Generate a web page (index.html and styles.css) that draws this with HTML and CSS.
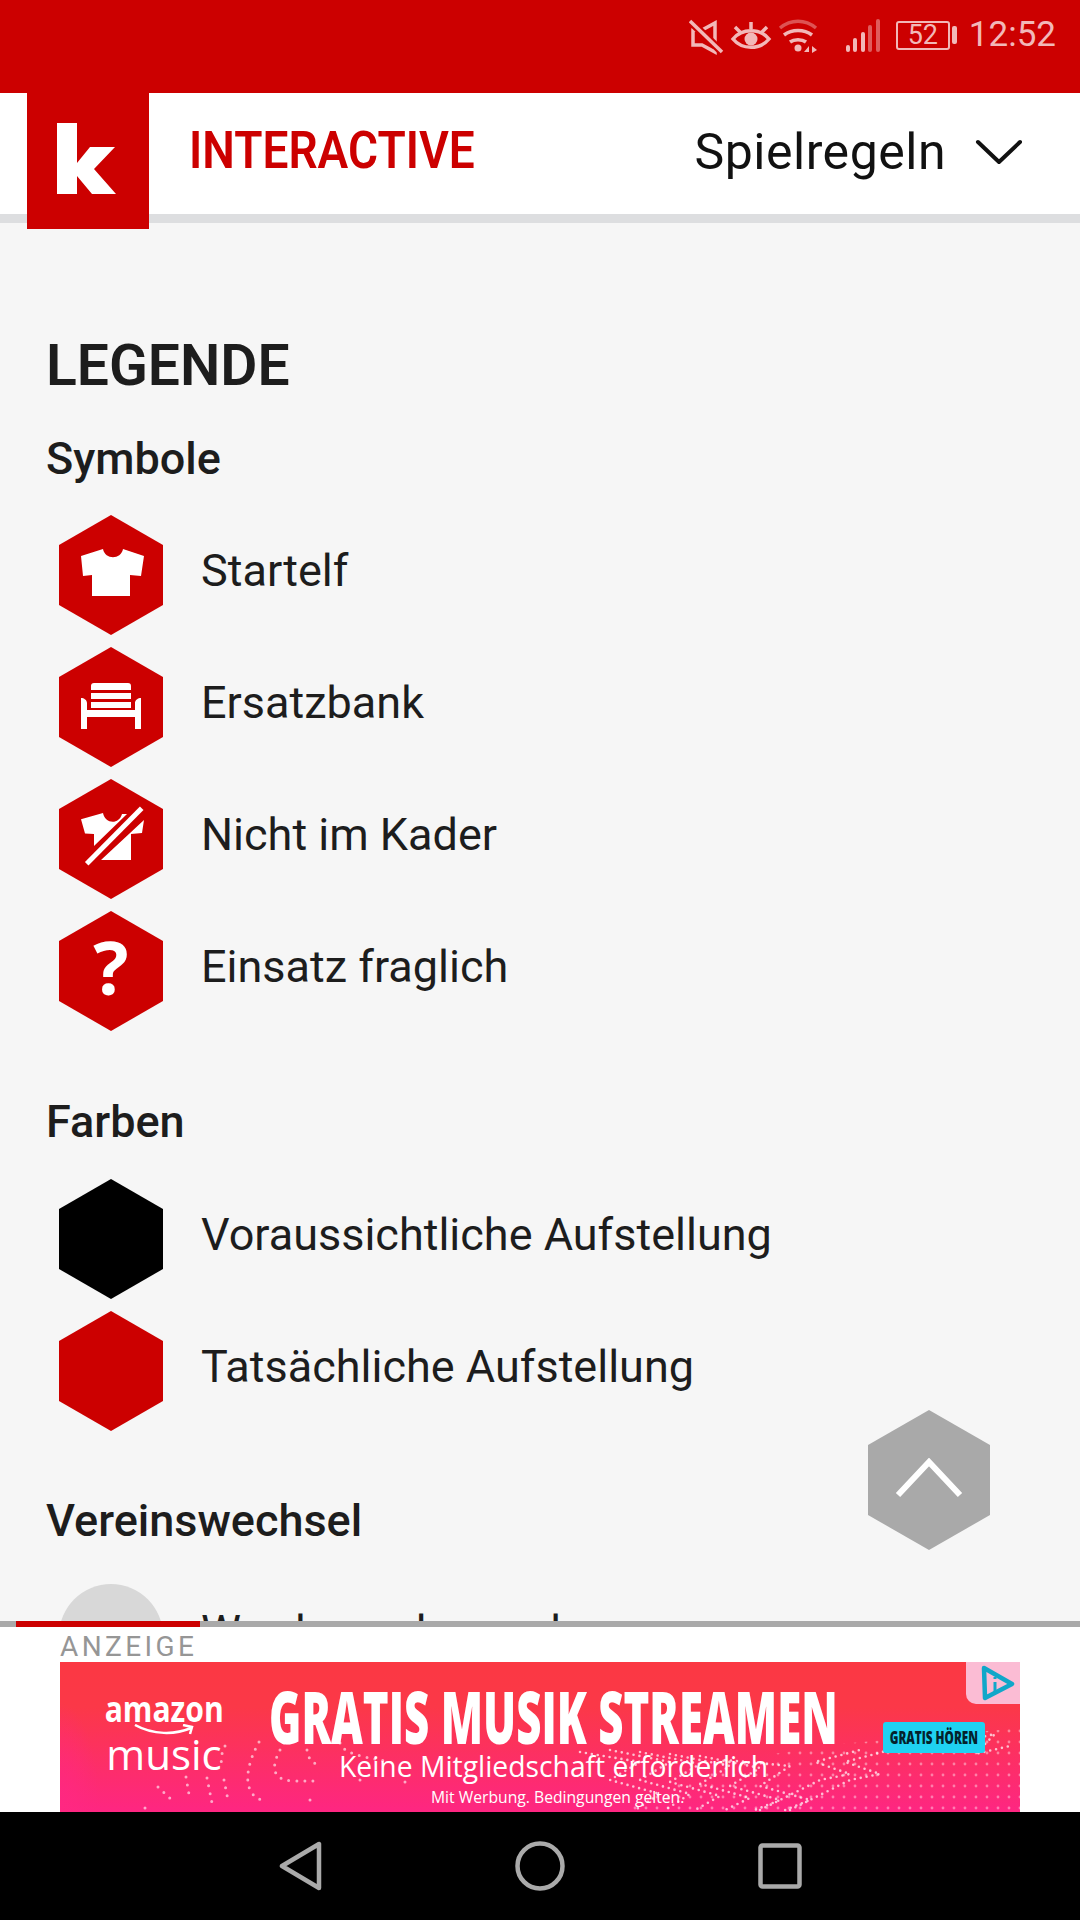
FILE: index.html
```html
<!DOCTYPE html>
<html lang="de">
  <head>
    <meta charset="UTF-8" />
    <meta name="viewport" content="width=device-width, initial-scale=1.0" />
    <title>Legende</title>
    <link rel="stylesheet" href="styles.css">
  </head>
  <body>
    <div class="statusbar">
      <svg class="status-icons" width="191" height="40" viewBox="0 0 191 40">
        <g fill="none" stroke="#f2b8b8" stroke-width="3.5">
          <path d="M4 13h9l13-7v29l-13-7h-9z" />
          <path d="M1 4l32 31" stroke="#cc0000" stroke-width="8" />
          <path d="M1 4l32 31" />
          <path d="M44 22c9-11 27-11 36 0c-9 11-27 11-36 0z" />
          <path d="M62 5v7M46 10l6 6M78 10l-6 6" />
          <path d="M91 11c11-9 25-9 36 0" opacity=".45" />
          <path d="M95 18c8-6 20-6 28 0" />
          <path d="M101 25c4-3 12-3 16 0" />
        </g>
        <circle cx="62" cy="22" r="6.5" fill="#f2b8b8" />
        <circle cx="109" cy="31" r="3.5" fill="#f2b8b8" />
        <path d="M115 35l5-6v6zM123 29l5 4l-5 3z" fill="#f2b8b8" />
        <g fill="#f2b8b8">
          <rect x="157" y="28" width="4" height="7" rx="2" />
          <rect x="164" y="21" width="4" height="14" rx="2" />
          <rect x="172" y="15" width="4" height="20" rx="2" />
          <rect x="179" y="8" width="4" height="27" rx="2" opacity=".5" />
          <rect x="187" y="2" width="4" height="33" rx="2" opacity=".5" />
        </g>
      </svg>
      <div class="battery"><span>52</span></div>
      <div class="battery-cap"></div>
      <span class="clock">12:52</span>
    </div>

    <header class="topbar">
      <div class="logo">
        <svg width="59" height="71" viewBox="0 0 59 71">
          <path d="M0 0H20V40L33 24H58L37 46L59 71H35L20 53V71H0Z" fill="#fff" />
        </svg>
      </div>
      <span class="brand">INTERACTIVE</span>
      <div class="menu">
        <span>Spielregeln</span>
        <svg width="48" height="26" viewBox="0 0 48 26">
          <path d="M3 3l21 20l21-20" fill="none" stroke="#111" stroke-width="4" stroke-linecap="round" stroke-linejoin="round" />
        </svg>
      </div>
    </header>

    <main class="content">
      <h1>LEGENDE</h1>

      <h2 class="symbole">Symbole</h2>
      <ul class="legend">
        <li>
          <div class="hex">
            <svg class="hex-icon" width="64" height="50" viewBox="0 0 64 50"><path d="M0 9l22-7c2 11 18 11 20 0l21 7-3 20-11-1v21h-38v-21l-9 1z" fill="#fff" /></svg>
          </div>
          <span>Startelf</span>
        </li>
        <li>
          <div class="hex">
            <svg class="bench-icon" width="60" height="46" viewBox="0 0 60 46">
              <path d="M10 3a3 3 0 0 1 3-3h34a3 3 0 0 1 3 3v4h-40zM10 10h40v6h-40zM10 19h40v6h-40zM0 15c3 0 6 2 6 5v7h48v-7c0-3 3-5 6-5v31h-6v-12h-48v12h-6z" fill="#fff" />
            </svg>
          </div>
          <span>Ersatzbank</span>
        </li>
        <li>
          <div class="hex">
            <svg class="hex-icon" width="64" height="60" viewBox="0 0 64 60">
              <path d="M0 13.3L22 7C24 18 38 19 41 8L46 8L13 40V28L4 27.5ZM20 54L63 14L61 27L50 28V54Z" fill="#fff" />
              <path d="M5.7 57.7L60.7 2.3" stroke="#fff" stroke-width="5" />
            </svg>
          </div>
          <span>Nicht im Kader</span>
        </li>
        <li>
          <div class="hex"><span class="question">?</span></div>
          <span>Einsatz fraglich</span>
        </li>
      </ul>

      <h2 class="farben">Farben</h2>
      <ul class="legend">
        <li>
          <div class="hex black"></div>
          <span>Voraussichtliche Aufstellung</span>
        </li>
        <li>
          <div class="hex"></div>
          <span>Tatsächliche Aufstellung</span>
        </li>
      </ul>

      <h2 class="wechsel">Vereinswechsel</h2>
      <ul class="legend">
        <li>
          <div class="circle"></div>
          <span>Wurde an den anderen</span>
        </li>
      </ul>
    </main>

    <button class="to-top">
      <svg width="68" height="40" viewBox="0 0 68 40"><path d="M3 37l31-33l31 33" fill="none" stroke="#fff" stroke-width="6" /></svg>
    </button>

    <div class="ad-area">
      <div class="progress"></div>
      <div class="ad-label">ANZEIGE</div>
      <div class="banner">
        <svg class="dots" width="960" height="150" viewBox="0 0 960 150">
          <defs>
            <pattern id="dotgrid" width="11" height="11" patternUnits="userSpaceOnUse">
              <circle cx="3" cy="3" r="1.4" fill="#fff" />
            </pattern>
          </defs>
          <path d="M560 150L660 100L780 82L960 66V150Z" fill="url(#dotgrid)" opacity=".4" />
          <g fill="none" stroke="#fff" stroke-linecap="round" stroke-width="3" stroke-dasharray="0 8" opacity=".6">
            <path d="M199 80C185 105 182 132 202 138M165 84C160 95 160 100 164 105M224 81C212 100 208 118 233 119L254 119" />
            <path d="M247 88C248 96 252 102 260 103M280 81C284 92 300 94 330 100M126 115L130 138M147 116L152 141M164 118L168 138M98 125L112 138" />
            <path d="M300 118L304 120M250 138L258 138M85 146L92 148M345 120L350 122" />
          </g>
          <g fill="none" stroke="#fff" stroke-linecap="round" stroke-width="2.6" stroke-dasharray="0 6" opacity=".7">
            <path d="M520 90L580 100L550 118L600 132L575 148" />
            <path d="M550 88L610 100L580 118L630 132L605 148" />
            <path d="M580 90L640 102L610 120L660 134L635 148" />
            <path d="M610 92L670 104L640 122L690 136L665 148" />
            <path d="M640 94L700 106L670 124L720 138L695 148" />
            <path d="M665 98L730 104L700 124L750 138L725 148" />
            <path d="M700 148L760 118L790 112L755 100L800 88" />
            <path d="M730 148L790 118L820 112L785 100L830 88" />
            <path d="M890 82L935 72L915 92L950 84" />
          </g>
        </svg>
        <div class="ad-logo">
          <span class="ad-amazon">amazon</span>
          <svg width="62" height="12" viewBox="0 0 62 12"><path d="M2 1c18 10 40 10 56 3M50 1l9 2-2 7" fill="none" stroke="#fff" stroke-width="2.5" /></svg>
          <span class="ad-music">music</span>
        </div>
        <div class="ad-title">GRATIS MUSIK STREAMEN</div>
        <div class="ad-sub">Keine Mitgliedschaft erforderlich</div>
        <div class="ad-small">Mit Werbung. Bedingungen gelten.</div>
        <div class="ad-cta"><span>GRATIS HÖREN</span></div>
        <div class="ad-choice">
          <svg width="34" height="38" viewBox="0 0 34 38">
            <path d="M3 3l28 16l-27 14z" fill="none" stroke="#11a7c9" stroke-width="4.5" stroke-linejoin="round" />
            <path d="M14 17v10M14 12v2" fill="none" stroke="#11a7c9" stroke-width="3" />
          </svg>
        </div>
      </div>
    </div>

    <nav class="navbar">
      <svg width="43" height="50" viewBox="0 0 43 50"><path d="M40 3v44l-37-22z" fill="none" stroke="#aaa" stroke-width="4.5" stroke-linejoin="round" /></svg>
      <svg width="50" height="50" viewBox="0 0 50 50"><circle cx="25" cy="25" r="22.5" fill="none" stroke="#aaa" stroke-width="4.5" /></svg>
      <svg width="44" height="46" viewBox="0 0 44 46"><rect x="2.5" y="2.5" width="39" height="41" rx="2" fill="none" stroke="#aaa" stroke-width="4.5" /></svg>
    </nav>
  </body>
</html>
```

FILE: styles.css
```css
* {
  box-sizing: border-box;
}

html,
body {
  margin: 0;
  height: 1920px;
  overflow: hidden;
}

body {
  position: relative;
  width: 1080px;
  background-color: #f6f6f6;
  font-family: "Roboto", sans-serif;
  color: #1d1d1d;
}

/* status bar */
.statusbar {
  height: 93px;
  background-color: #cc0000;
  color: #f2b8b8;
  display: flex;
  align-items: flex-start;
  justify-content: flex-end;
  padding-top: 17px;
  padding-right: 24px;
}

.status-icons {
  margin-right: 16px;
}

.battery {
  width: 54px;
  height: 29px;
  margin-top: 4px;
  border: 2px solid #f2b8b8;
  border-radius: 3px;
  font-size: 27px;
  line-height: 25px;
  text-align: center;
}

.battery-cap {
  width: 5px;
  height: 18px;
  margin: 9px 12px 0 2px;
  background-color: #f2b8b8;
  border-radius: 2px;
}

.clock {
  font-size: 35px;
  line-height: 36px;
}

/* header */
.topbar {
  height: 130px;
  background-color: #fff;
  border-bottom: 9px solid #dddee0;
  display: flex;
  align-items: flex-start;
  padding-left: 27px;
  padding-right: 57px;
}

.logo {
  width: 122px;
  height: 136px;
  background-color: #cc0000;
  padding: 30px 0 0 30px;
  flex-shrink: 0;
}

.logo svg {
  display: block;
}

.brand {
  margin-left: 40px;
  margin-top: 28px;
  font-weight: 600;
  font-size: 52px;
  line-height: 60px;
  color: #cc0000;
  transform: scaleX(0.885);
  transform-origin: left center;
}

.menu {
  margin-left: auto;
  margin-top: 29px;
  display: flex;
  align-items: center;
  gap: 29px;
  font-size: 50px;
  line-height: 60px;
  letter-spacing: 0.5px;
  color: #111;
}

/* legend */
.content {
  padding: 0 46px;
}

h1 {
  margin: 0;
  padding-top: 113px;
  font-size: 57px;
  line-height: 60px;
  font-weight: 600;
}

h2 {
  margin: 0;
  font-size: 45px;
  line-height: 50px;
  font-weight: 500;
}

.symbole {
  margin-top: 38px;
  margin-bottom: 31px;
}

.farben {
  margin-top: 66px;
  margin-bottom: 32px;
}

.wechsel {
  margin-top: 65px;
  margin-bottom: 30px;
}

.legend {
  list-style: none;
  margin: 0;
  padding: 0 0 0 13px;
}

.legend li {
  display: flex;
  align-items: center;
  gap: 38px;
  height: 120px;
  margin-bottom: 12px;
  font-size: 45px;
  line-height: 50px;
}

.legend li > span {
  padding-bottom: 8px;
}

.hex {
  width: 104px;
  height: 120px;
  flex-shrink: 0;
  background-color: #cc0000;
  clip-path: polygon(50% 0, 100% 25%, 100% 75%, 50% 100%, 0 75%, 0 25%);
  display: flex;
  align-items: center;
  justify-content: center;
}

.hex.black {
  background-color: #000;
}

.hex-icon {
  margin-bottom: 6px;
  margin-left: 3px;
}

.bench-icon {
  margin-bottom: 3px;
}

.question {
  font-family: "Open Sans", sans-serif;
  font-weight: 700;
  font-size: 74px;
  line-height: 80px;
  color: #fff;
  padding-bottom: 8px;
}

.circle {
  width: 104px;
  height: 104px;
  flex-shrink: 0;
  border-radius: 50%;
  background-color: #d8d8d8;
}

.to-top {
  position: absolute;
  left: 868px;
  top: 1410px;
  width: 122px;
  height: 140px;
  border: none;
  background-color: #a9a9a9;
  clip-path: polygon(50% 0, 100% 25%, 100% 75%, 50% 100%, 0 75%, 0 25%);
  display: flex;
  align-items: center;
  justify-content: center;
  padding: 0 0 4px;
}

/* ad */
.ad-area {
  position: absolute;
  left: 0;
  top: 1621px;
  width: 1080px;
  height: 191px;
  background-color: #fff;
  border-top: 6px solid #a9a9a9;
}

.progress {
  position: absolute;
  left: 16px;
  top: -6px;
  width: 184px;
  height: 6px;
  background-color: #cc0000;
}

.ad-label {
  position: absolute;
  left: 60px;
  top: 6px;
  font-size: 28px;
  line-height: 28px;
  letter-spacing: 3.4px;
  color: #969696;
}

.banner {
  position: absolute;
  left: 60px;
  top: 35px;
  width: 960px;
  height: 150px;
  overflow: hidden;
  background: linear-gradient(180deg, #fb3843 0%, #fb3848 30%, #fe2682 100%);
  color: #fff;
}

.banner::before {
  content: "";
  position: absolute;
  left: 0;
  top: 0;
  bottom: 0;
  width: 60px;
  background: radial-gradient(ellipse 40px 110px at 0 100%, rgba(255, 40, 130, 0.9), rgba(255, 40, 130, 0));
}

.dots {
  position: absolute;
  left: 0;
  top: 0;
}

.ad-logo {
  position: absolute;
  left: 47px;
  top: 33px;
  width: 114px;
  display: flex;
  flex-direction: column;
  align-items: center;
  font-family: "Open Sans", sans-serif;
}

.ad-amazon {
  font-size: 35px;
  font-weight: 700;
  line-height: 28px;
  transform: scaleX(0.86);
}

.ad-logo svg {
  margin-top: 1px;
  margin-bottom: 1px;
}

.ad-music {
  font-size: 42px;
  line-height: 34px;
}

.ad-title {
  position: absolute;
  left: 209px;
  top: 24px;
  font-family: "Open Sans", sans-serif;
  font-weight: 800;
  font-size: 73px;
  line-height: 60px;
  white-space: nowrap;
  transform: scaleX(0.6);
  transform-origin: left center;
}

.ad-sub {
  position: absolute;
  left: 279px;
  top: 91px;
  font-family: "Open Sans", sans-serif;
  font-size: 28.3px;
  line-height: 26px;
  white-space: nowrap;
}

.ad-small {
  position: absolute;
  left: 371px;
  top: 126px;
  font-family: "Open Sans", sans-serif;
  font-size: 15.7px;
  line-height: 18px;
  white-space: nowrap;
}

.ad-cta {
  position: absolute;
  left: 823px;
  top: 60px;
  width: 102px;
  height: 31px;
  background-color: #1fd2f2;
  border-radius: 3px;
  color: #04222c;
  font-family: "Open Sans", sans-serif;
  font-weight: 800;
  font-size: 18px;
  line-height: 31px;
  text-align: center;
  white-space: nowrap;
}

.ad-cta span {
  display: inline-block;
  transform: scaleX(0.65);
  margin: 0 -20px;
}

.ad-choice {
  position: absolute;
  right: 0;
  top: 0;
  width: 54px;
  height: 42px;
  background-color: #fbbcd4;
  border-bottom-left-radius: 10px;
  padding: 3px 0 0 15px;
}

/* android nav */
.navbar {
  position: absolute;
  left: 0;
  top: 1812px;
  width: 1080px;
  height: 108px;
  background-color: #000;
  display: flex;
  align-items: center;
  justify-content: center;
  gap: 193px;
}
```
